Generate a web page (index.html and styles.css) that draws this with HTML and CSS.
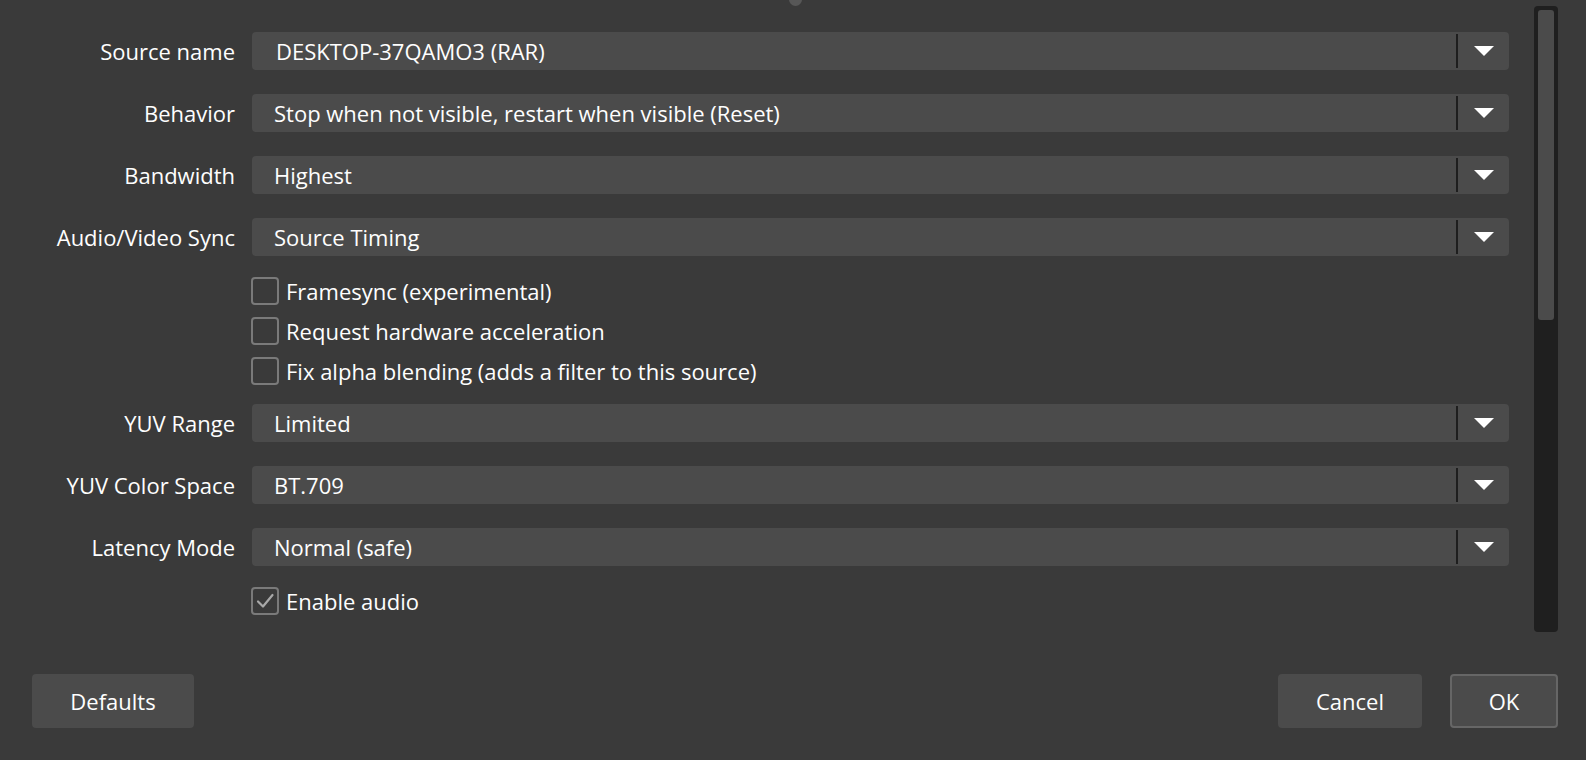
FILE: index.html
```html
<!DOCTYPE html>
<html>
<head>
<meta charset="utf-8">
<link rel="stylesheet" href="styles.css">
</head>
<body>
<div class="window">
  <div class="splitter-handle"></div>
  <div class="main">
    <div class="form">
      <div class="row combo-row">
        <div class="label">Source name</div>
        <div class="combo editable"><span class="value">DESKTOP-37QAMO3 (RAR)</span><span class="arrow"><svg width="20" height="10" viewBox="0 0 20 10"><path d="M0 0H20L10 10Z" fill="#fff"/></svg></span></div>
      </div>
      <div class="row combo-row">
        <div class="label">Behavior</div>
        <div class="combo"><span class="value">Stop when not visible, restart when visible (Reset)</span><span class="arrow"><svg width="20" height="10" viewBox="0 0 20 10"><path d="M0 0H20L10 10Z" fill="#fff"/></svg></span></div>
      </div>
      <div class="row combo-row">
        <div class="label">Bandwidth</div>
        <div class="combo"><span class="value">Highest</span><span class="arrow"><svg width="20" height="10" viewBox="0 0 20 10"><path d="M0 0H20L10 10Z" fill="#fff"/></svg></span></div>
      </div>
      <div class="row combo-row">
        <div class="label">Audio/Video Sync</div>
        <div class="combo"><span class="value">Source Timing</span><span class="arrow"><svg width="20" height="10" viewBox="0 0 20 10"><path d="M0 0H20L10 10Z" fill="#fff"/></svg></span></div>
      </div>
      <div class="row check-row">
        <div class="label"></div>
        <label class="check"><span class="box"></span><span>Framesync (experimental)</span></label>
      </div>
      <div class="row check-row">
        <div class="label"></div>
        <label class="check"><span class="box"></span><span>Request hardware acceleration</span></label>
      </div>
      <div class="row check-row">
        <div class="label"></div>
        <label class="check"><span class="box"></span><span>Fix alpha blending (adds a filter to this source)</span></label>
      </div>
      <div class="row combo-row">
        <div class="label">YUV Range</div>
        <div class="combo"><span class="value">Limited</span><span class="arrow"><svg width="20" height="10" viewBox="0 0 20 10"><path d="M0 0H20L10 10Z" fill="#fff"/></svg></span></div>
      </div>
      <div class="row combo-row">
        <div class="label">YUV Color Space</div>
        <div class="combo"><span class="value">BT.709</span><span class="arrow"><svg width="20" height="10" viewBox="0 0 20 10"><path d="M0 0H20L10 10Z" fill="#fff"/></svg></span></div>
      </div>
      <div class="row combo-row">
        <div class="label">Latency Mode</div>
        <div class="combo"><span class="value">Normal (safe)</span><span class="arrow"><svg width="20" height="10" viewBox="0 0 20 10"><path d="M0 0H20L10 10Z" fill="#fff"/></svg></span></div>
      </div>
      <div class="row check-row">
        <div class="label"></div>
        <label class="check"><span class="box checked"><svg width="22" height="22" viewBox="0 0 22 22"><path d="M4 11.5L9 16.5L18.5 5" fill="none" stroke="#a8a8a8" stroke-width="2.2" stroke-linecap="round" stroke-linejoin="round"/></svg></span><span>Enable audio</span></label>
      </div>
    </div>
    <div class="scrollbar"><div class="handle"></div></div>
  </div>
  <div class="buttons">
    <button class="btn defaults">Defaults</button>
    <div class="spacer"></div>
    <button class="btn cancel">Cancel</button>
    <button class="btn ok">OK</button>
  </div>
</div>
</body>
</html>
```
FILE: styles.css
```css
* { box-sizing: border-box; }
html, body {
  margin: 0;
  padding: 0;
  background: #3a3a3a;
}
body {
  font-family: "Open Sans", "Noto Sans", sans-serif;
  font-size: 22px;
  color: #fefefe;
  width: 1586px;
  height: 760px;
  overflow: hidden;
}
.window {
  position: relative;
  width: 1586px;
  height: 760px;
  display: flex;
  flex-direction: column;
}
.splitter-handle {
  position: absolute;
  left: 789px;
  top: -7px;
  width: 13px;
  height: 13px;
  border-radius: 50%;
  background: #575757;
}
.main {
  display: flex;
  height: 640px;
  padding-right: 28px;
}
.form {
  flex: 1;
  padding-top: 32px;
  padding-right: 25px;
  display: flex;
  flex-direction: column;
}
.row {
  display: grid;
  grid-template-columns: 235px 1fr;
  column-gap: 17px;
  align-items: center;
}
.combo-row { height: 38px; }
.check-row { height: 40px; }
.combo-row + .combo-row { margin-top: 24px; }
.combo-row + .check-row { margin-top: 15px; }
.check-row + .combo-row { margin-top: 13px; }
.label {
  text-align: right;
  white-space: nowrap;
  line-height: 38px;
}
.combo {
  height: 38px;
  background: #4b4b4b;
  border-radius: 4px;
  display: flex;
  align-items: center;
  padding-left: 22px;
}
.combo.editable { padding-left: 24px; }
.combo .value {
  flex: 1;
  white-space: nowrap;
  line-height: 38px;
}
.combo .arrow {
  width: 53px;
  height: 34px;
  border-left: 2px solid #1e1e1e;
  display: flex;
  align-items: center;
  justify-content: center;
}
.combo .arrow svg { display: block; margin-top: -1px; }
.check {
  display: flex;
  align-items: center;
  gap: 7px;
  white-space: nowrap;
  margin-left: -1px;
}
.box {
  width: 28px;
  height: 28px;
  border: 2px solid #7a7a7a;
  border-radius: 4px;
  display: flex;
  align-items: center;
  justify-content: center;
}
.scrollbar {
  width: 24px;
  margin-top: 6px;
  height: 626px;
  background: #1f1f1f;
  border-radius: 4px;
  padding: 4px;
}
.handle {
  height: 310px;
  background: #4b4b4b;
  border-radius: 3px;
}
.buttons {
  display: flex;
  align-items: center;
  padding: 34px 28px 0 32px;
  gap: 28px;
}
.spacer { flex: 1; }
.btn {
  font-family: "Open Sans", "Noto Sans", sans-serif;
  font-size: 22px;
  color: #fefefe;
  background: #4b4b4b;
  border: none;
  border-radius: 4px;
  height: 54px;
  padding: 0;
}
.defaults { width: 162px; }
.cancel { width: 144px; }
.ok {
  width: 108px;
  border: 2px solid #666666;
}
```
